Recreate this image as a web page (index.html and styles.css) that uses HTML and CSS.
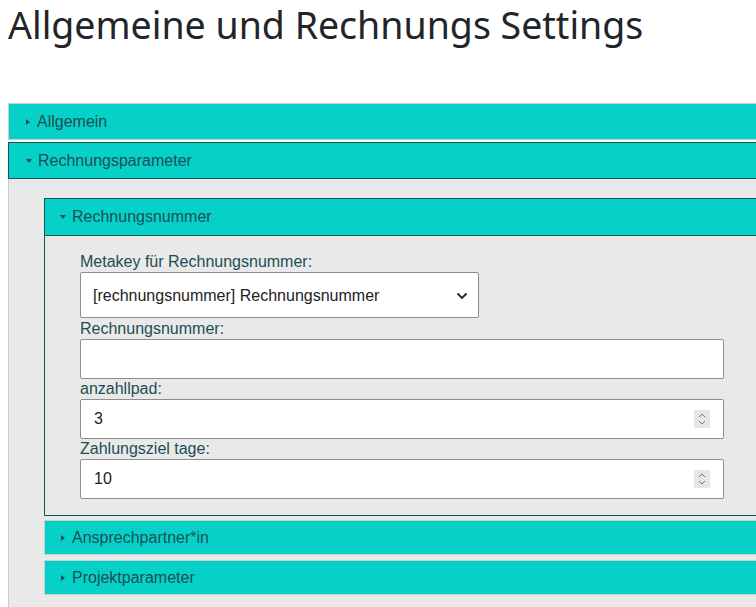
FILE: index.html
```html
<!DOCTYPE html>
<html lang="de">
<head>
    <meta charset="UTF-8">
    <meta name="viewport" content="width=device-width, initial-scale=1.0">
    <title>Allgemeine und Rechnungs Settings</title>
    <link rel="stylesheet" href="styles.css">
</head>
<body>
    <h1 class="page-title">Allgemeine und Rechnungs Settings</h1>

    <div class="settings">
        <details class="group">
            <summary>Allgemein</summary>
        </details>

        <details class="group" open>
            <summary>Rechnungsparameter</summary>
            <div class="group-body">
                <details class="sub" open>
                    <summary>Rechnungsnummer</summary>
                    <div class="sub-body">
                        <label class="field-label" for="metakey">Metakey für Rechnungsnummer:</label>
                        <div class="select-wrap">
                            <select id="metakey" class="field-select">
                                <option>[rechnungsnummer] Rechnungsnummer</option>
                            </select>
                            <svg class="select-chevron" width="12" height="8" viewBox="0 0 12 8"><path d="M1.5 1.5 L6 6 L10.5 1.5" fill="none" stroke="#222" stroke-width="1.8"/></svg>
                        </div>

                        <label class="field-label" for="nummer">Rechnungsnummer:</label>
                        <input id="nummer" class="field-input" type="text">

                        <label class="field-label" for="pad">anzahllpad:</label>
                        <div class="number-wrap">
                            <input id="pad" class="field-input" type="text" value="3">
                            <span class="spinner">
                                <svg width="8" height="14" viewBox="0 0 8 14"><path d="M1 5 L4 2 L7 5 M1 9 L4 12 L7 9" fill="none" stroke="#777" stroke-width="1"/></svg>
                            </span>
                        </div>

                        <label class="field-label" for="ziel">Zahlungsziel tage:</label>
                        <div class="number-wrap">
                            <input id="ziel" class="field-input" type="text" value="10">
                            <span class="spinner">
                                <svg width="8" height="14" viewBox="0 0 8 14"><path d="M1 5 L4 2 L7 5 M1 9 L4 12 L7 9" fill="none" stroke="#777" stroke-width="1"/></svg>
                            </span>
                        </div>
                    </div>
                </details>

                <details class="sub">
                    <summary>Ansprechpartner*in</summary>
                </details>

                <details class="sub">
                    <summary>Projektparameter</summary>
                </details>
            </div>
        </details>
    </div>
</body>
</html>
```
FILE: styles.css
```css
body {
    margin: 0;
    overflow: hidden;
    background-color: #fff;
    font-family: 'Liberation Sans', Arial, sans-serif;
    font-size: 16px;
}

.page-title {
    margin: 0;
    padding: 0 0 0 8px;
    font-family: 'Noto Sans', sans-serif;
    font-weight: 400;
    font-size: 37.5px;
    line-height: 50px;
    color: #212529;
}

.settings {
    margin: 53px -80px 0 8px;
}

details > summary {
    list-style: none;
    display: flex;
    align-items: center;
    height: 35px;
    padding-left: 17px;
    background-color: #05d1c8;
    color: #1b4f55;
    border-top: 1px solid #c4d2d2;
    border-bottom: 1px solid #c4d2d2;
    cursor: pointer;
}

details > summary::-webkit-details-marker {
    display: none;
}

/* triangle marker before the heading text */
details > summary::before {
    content: "";
    width: 0;
    height: 0;
    margin-right: 7px;
    border-top: 3.5px solid transparent;
    border-bottom: 3.5px solid transparent;
    border-left: 4px solid #1b4f55;
}

details[open] > summary {
    border-color: #15555a;
}

details[open] > summary::before {
    border-left: 3.5px solid transparent;
    border-right: 3.5px solid transparent;
    border-top: 4px solid #1b4f55;
    border-bottom: 0;
    margin-right: 6px;
}

.group {
    margin-bottom: 2px;
}

.group > summary {
    border-left: 1px solid #c4d2d2;
}

.group[open] > summary {
    border-left-color: #15555a;
}

.group-body {
    background-color: #e9e9e9;
    border-left: 1px solid #c9c9c9;
    padding: 19px 0 14px 35px;
}

.sub {
    margin-bottom: 5px;
}

.sub > summary {
    height: 33px;
    padding-left: 16px;
    border-left: 1px solid #c4d2d2;
}

.sub[open] > summary {
    height: 36px;
    border-left: 0;
    padding-left: 15px;
}

.sub[open] {
    border-left: 1px solid #15555a;
    border-bottom: 1px solid #15555a;
    margin-bottom: 4px;
}

.sub-body {
    padding: 16px 0 16px 35px;
}

.field-label {
    display: block;
    line-height: 20px;
    color: #1b4f55;
}

.select-wrap {
    position: relative;
    width: 399px;
}

.field-select {
    display: block;
    box-sizing: border-box;
    width: 100%;
    height: 46px;
    padding: 0 12px;
    appearance: none;
    -webkit-appearance: none;
    background-color: #fff;
    border: 1px solid #8d8d8d;
    border-radius: 2px;
    font-family: inherit;
    font-size: 16px;
    color: #222;
}

.select-chevron {
    position: absolute;
    right: 11px;
    top: 20px;
    pointer-events: none;
}

.select-wrap + .field-label {
    margin-top: 1px;
}

.field-input {
    display: block;
    box-sizing: border-box;
    width: 644px;
    height: 40px;
    padding: 0 13px;
    background-color: #fff;
    border: 1px solid #8d8d8d;
    border-radius: 2px;
    font-family: inherit;
    font-size: 16px;
    color: #222;
}

.number-wrap {
    position: relative;
    width: 644px;
}

.spinner {
    position: absolute;
    right: 14px;
    top: 11px;
    width: 16px;
    height: 18px;
    display: flex;
    align-items: center;
    justify-content: center;
    background-color: #e6e6ea;
}
```
